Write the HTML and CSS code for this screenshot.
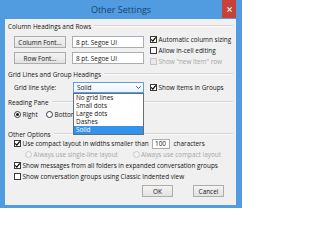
FILE: index.html
```html
<!DOCTYPE html>
<html>
<head>
<meta charset="utf-8">
<link rel="stylesheet" href="styles.css">
</head>
<body>
<div class="window">
  <div class="titlebar">
    <span class="title">Other Settings</span>
    <div class="close">
      <svg viewBox="0 0 6 6" width="5" height="5"><path d="M0.5 0.5 L5.5 5.5 M5.5 0.5 L0.5 5.5" stroke="#fff" stroke-width="1.3"/></svg>
    </div>
  </div>
  <div class="panel">
    <div class="group-head first"><span>Column Headings and Rows</span><i class="rule"></i></div>
    <div class="g1">
      <div class="fonts">
        <div class="font-row"><div class="btn wide">Column Font...</div><div class="field">8 pt. Segoe UI</div></div>
        <div class="font-row"><div class="btn wide">Row Font...</div><div class="field">8 pt. Segoe UI</div></div>
      </div>
      <div class="checks">
        <div class="chk"><span class="box"><svg viewBox="0 0 7 7"><path d="M1.2 3.4 L2.8 5.1 L5.8 1.3" stroke="#000" stroke-width="1.2" fill="none"/></svg></span>Automatic column sizing</div>
        <div class="chk"><span class="box"></span>Allow in-cell editing</div>
        <div class="chk disabled"><span class="box"></span>Show "new item" row</div>
      </div>
    </div>

    <div class="group-head"><span>Grid Lines and Group Headings</span><i class="rule"></i></div>
    <div class="g2">
      <span class="g2-label">Grid line style:</span>
      <div class="select">
        <span>Solid</span>
        <svg class="chev" viewBox="0 0 5 3" width="5" height="3"><path d="M0.3 0.3 L2.5 2.5 L4.7 0.3" stroke="#444" stroke-width="0.9" fill="none"/></svg>
        <div class="list">
          <div class="item">No grid lines</div>
          <div class="item">Small dots</div>
          <div class="item">Large dots</div>
          <div class="item">Dashes</div>
          <div class="item sel">Solid</div>
        </div>
      </div>
      <div class="chk g2-chk"><span class="box"><svg viewBox="0 0 7 7"><path d="M1.2 3.4 L2.8 5.1 L5.8 1.3" stroke="#000" stroke-width="1.2" fill="none"/></svg></span>Show items in Groups</div>
    </div>

    <div class="group-head rp"><span>Reading Pane</span><i class="rule"></i></div>
    <div class="radios">
      <div class="rad first-rad"><span class="circle on"></span>Right</div>
      <div class="rad"><span class="circle"></span>Bottom</div>
    </div>

    <div class="group-head oo"><span>Other Options</span><i class="rule"></i></div>
    <div class="opt">
      <span class="box"><svg viewBox="0 0 7 7"><path d="M1.2 3.4 L2.8 5.1 L5.8 1.3" stroke="#000" stroke-width="1.2" fill="none"/></svg></span>
      <span class="compact-text">Use compact layout in widths smaller than</span>
      <span class="num">100</span>
      <span class="chars">characters</span>
    </div>
    <div class="opt sub">
      <div class="rad disabled sub-first"><span class="circle"></span>Always use single-line layout</div>
      <div class="rad disabled"><span class="circle"></span>Always use compact layout</div>
    </div>
    <div class="opt">
      <span class="box"><svg viewBox="0 0 7 7"><path d="M1.2 3.4 L2.8 5.1 L5.8 1.3" stroke="#000" stroke-width="1.2" fill="none"/></svg></span>
      <span>Show messages from all folders in expanded conversation groups</span>
    </div>
    <div class="opt">
      <span class="box"></span>
      <span>Show conversation groups using Classic Indented view</span>
    </div>

    <div class="actions">
      <div class="btn act">OK</div>
      <div class="btn act">Cancel</div>
    </div>
  </div>
</div>
</body>
</html>
```

FILE: styles.css
```css
body {
  margin: 0;
}

.window {
  width: 242px;
  height: 208px;
  background: #519ce0;
  display: flex;
  flex-direction: column;
  font-family: "Open Sans", "Noto Sans", sans-serif;
  font-size: 6.4px;
  color: #141414;
  overflow: hidden;
}

.titlebar {
  height: 19px;
  flex: none;
  display: grid;
  grid-template-columns: 1fr auto 1fr;
  align-items: start;
}

.title {
  grid-column: 2;
  line-height: 19px;
  font-size: 9px;
  color: #1e3f68;
}

.close {
  grid-column: 3;
  justify-self: end;
  margin-right: 6px;
  width: 14px;
  height: 18px;
  background: #c8403a;
  display: flex;
  align-items: center;
  justify-content: center;
}

.panel {
  flex: 1;
  margin: 0 6px 3px 5px;
  padding: 0 3px;
  background: #f0f0f0;
}

.group-head {
  height: 8px;
  display: flex;
  align-items: center;
  gap: 3px;
  white-space: nowrap;
}

.group-head.first {
  margin-top: 3px;
}

.group-head.rp {
  margin-top: 5px;
}

.group-head.oo {
  margin-top: 11px;
}

.rule {
  flex: 1;
  height: 0;
  border-top: 1px solid #d6d6d6;
  border-bottom: 1px solid #fbfbfb;
}

.g1 {
  height: 40px;
  display: flex;
  padding-left: 6px;
}

.fonts {
  padding-top: 6px;
  display: flex;
  flex-direction: column;
  gap: 4px;
}

.font-row {
  display: flex;
  gap: 6px;
  height: 12px;
}

.btn {
  box-sizing: border-box;
  height: 12px;
  border: 1px solid #adadad;
  background: linear-gradient(#f3f3f3, #e3e3e3);
  display: flex;
  align-items: center;
  justify-content: center;
  white-space: nowrap;
}

.btn.wide {
  width: 52px;
}

.field {
  box-sizing: border-box;
  width: 72px;
  height: 12px;
  border: 1px solid #abadb3;
  background: #fff;
  padding-left: 3px;
  display: flex;
  align-items: center;
  white-space: nowrap;
}

.checks {
  margin-left: 6px;
  padding-top: 4px;
  display: flex;
  flex-direction: column;
}

.chk {
  height: 11px;
  display: flex;
  align-items: center;
  gap: 1.5px;
  white-space: nowrap;
}

.box {
  flex: none;
  box-sizing: border-box;
  width: 7px;
  height: 7px;
  border: 1px solid #3a3a3a;
  background: #fff;
  display: flex;
}

.box svg {
  width: 7px;
  height: 7px;
  margin: -1px;
}

.chk.disabled {
  color: #a6a6a6;
}

.chk.disabled .box {
  border-color: #c6c6c6;
  background: #e8e8e8;
}

.g2 {
  margin-top: 4px;
  height: 11px;
  display: flex;
  align-items: center;
  padding-left: 6px;
}

.g2-label {
  width: 59px;
  white-space: nowrap;
}

.select {
  position: relative;
  box-sizing: border-box;
  width: 71px;
  height: 11px;
  border: 1px solid #5b9fe0;
  background: linear-gradient(#fdfeff, #eaf3fc);
  padding-left: 3px;
  display: flex;
  align-items: center;
}

.chev {
  margin-left: auto;
  margin-right: 2px;
}

.list {
  position: absolute;
  left: -1px;
  top: 10px;
  width: 71px;
  box-sizing: border-box;
  border: 1px solid #646e7a;
  background: #fff;
  z-index: 2;
}

.item {
  height: 8px;
  line-height: 8px;
  padding-left: 2px;
  white-space: nowrap;
}

.item.sel {
  background: #3392ea;
  color: #fff;
}

.g2-chk {
  margin-left: 6px;
}

.radios {
  margin-top: 3px;
  height: 10px;
  display: flex;
  align-items: center;
  padding-left: 6px;
}

.rad {
  display: flex;
  align-items: center;
  gap: 1.5px;
  white-space: nowrap;
}

.first-rad {
  width: 32px;
}

.circle {
  flex: none;
  box-sizing: border-box;
  width: 7px;
  height: 7px;
  border: 1px solid #3a3a3a;
  border-radius: 50%;
  background: #fff;
  display: flex;
  align-items: center;
  justify-content: center;
}

.circle.on::after {
  content: "";
  width: 3px;
  height: 3px;
  border-radius: 50%;
  background: #1a1a1a;
}

.rad.disabled {
  color: #a6a6a6;
}

.rad.disabled .circle {
  border-color: #c8c8c8;
  background: #f2f2f2;
}

.opt {
  height: 11px;
  display: flex;
  align-items: center;
  padding-left: 6px;
  gap: 1.5px;
  white-space: nowrap;
}

.compact-text {
  width: 127px;
}

.num {
  box-sizing: border-box;
  width: 18px;
  height: 10px;
  border: 1px solid #abadb3;
  background: #fff;
  padding-left: 2px;
  margin-left: 1px;
  display: flex;
  align-items: center;
}

.chars {
  margin-left: 2px;
}

.opt.sub {
  padding-left: 17px;
}

.sub-first {
  width: 106px;
}

.actions {
  margin-top: 3px;
  display: flex;
  justify-content: flex-end;
  gap: 20px;
  padding-right: 9px;
}

.btn.act {
  width: 31px;
}
```
